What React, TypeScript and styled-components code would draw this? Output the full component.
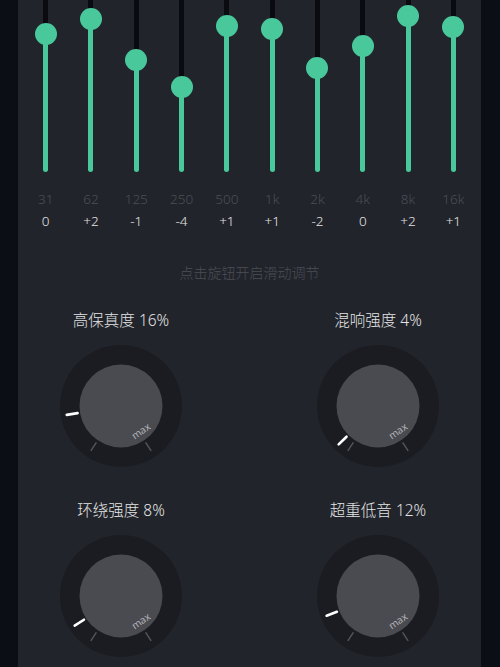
import styled, { createGlobalStyle } from 'styled-components'

const GlobalStyle = createGlobalStyle`
  html, body {
    margin: 0;
    padding: 0;
    background: #0b0e15;
    overflow: hidden;
  }
  body {
    font-family: "Noto Sans", "Noto Sans CJK SC", sans-serif;
  }
`

const color = {
    green: '#49c99b',
    track: '#0a0b10',
    panel: '#22242b',
    dim: '#4b4e56',
    text: '#e4e4e6',
    ring: '#1b1c22',
    face: '#4a4b51',
}

const Screen = styled.div`
  width: 500px;
  height: 667px;
  display: flex;
  background: #0b0e15;
`

const Panel = styled.div`
  margin-left: 18px;
  width: 463px;
  height: 667px;
  background: ${color.panel};
  display: flex;
  flex-direction: column;
  overflow: hidden;
`

const Equalizer = styled.div`
  display: grid;
  grid-template-columns: repeat(10, 1fr);
  padding: 0 5px;
`

const Band = styled.div`
  display: flex;
  flex-direction: column;
  align-items: center;
`

const Track = styled.div`
  position: relative;
  width: 5px;
  height: 172px;
  border-radius: 0 0 3px 3px;
  background: ${color.track};
`

const Fill = styled.div<{ top: number }>`
  position: absolute;
  left: 0;
  right: 0;
  bottom: 0;
  top: ${p => p.top}px;
  border-radius: 3px;
  background: ${color.green};
`

const Thumb = styled.div<{ top: number }>`
  position: absolute;
  left: 50%;
  top: ${p => p.top}px;
  width: 22px;
  height: 22px;
  margin: -11px 0 0 -11px;
  border-radius: 50%;
  background: ${color.green};
`

const Freq = styled.div`
  margin-top: 19px;
  font-size: 13.5px;
  font-weight: 300;
  line-height: 16px;
  color: ${color.dim};
`

const Gain = styled.div`
  margin-top: 6px;
  font-size: 13.5px;
  font-weight: 300;
  line-height: 16px;
  color: ${color.text};
`

const Hint = styled.div`
  margin-top: 35px;
  text-align: center;
  font-size: 14px;
  font-weight: 300;
  line-height: 18px;
  color: ${color.dim};
`

const KnobGrid = styled.div`
  margin-top: 28px;
  display: grid;
  grid-template-columns: 206px 206px;
  justify-content: space-between;
  row-gap: 32px;
`

const KnobCell = styled.div`
  display: flex;
  flex-direction: column;
  align-items: center;
`

const KnobLabel = styled.div`
  font-size: 15.5px;
  font-weight: 300;
  line-height: 20px;
  color: ${color.text};
`

const KnobFace = styled.svg`
  margin-top: 14px;
  display: block;
`

const bands = [
    { f: '31', g: '0', y: 34 },
    { f: '62', g: '+2', y: 19 },
    { f: '125', g: '-1', y: 60 },
    { f: '250', g: '-4', y: 87 },
    { f: '500', g: '+1', y: 26 },
    { f: '1k', g: '+1', y: 29 },
    { f: '2k', g: '-2', y: 68 },
    { f: '4k', g: '0', y: 46 },
    { f: '8k', g: '+2', y: 16 },
    { f: '16k', g: '+1', y: 27 },
]

const knobs = [
    { name: '高保真度', value: 16 },
    { name: '混响强度', value: 4 },
    { name: '环绕强度', value: 8 },
    { name: '超重低音', value: 12 },
]

const C = 62
const START = 214
const SWEEP = 292

const polar = (deg: number, r: number) => {
    const a = (deg * Math.PI) / 180
    return { x: C + r * Math.sin(a), y: C - r * Math.cos(a) }
}

const Knob = ({ value }: { value: number }) => {
    const ang = START + (SWEEP * value) / 100
    const p1 = polar(ang, 44)
    const p2 = polar(ang, 55)
    const ticks = [START, START + SWEEP].map(a => [polar(a, 44), polar(a, 54)])
    return (
        <KnobFace width={124} height={124} viewBox="0 0 124 124">
            <circle cx={C} cy={C} r={61} fill={color.ring} />
            <circle cx={C} cy={C} r={41.5} fill={color.face} />
            {ticks.map(([a, b], i) => (
                <line key={i} x1={a.x} y1={a.y} x2={b.x} y2={b.y} stroke="#55575d" strokeWidth={1.4} />
            ))}
            <text
                x={0}
                y={0}
                fontSize={10}
                fill="#b4b5b9"
                textAnchor="middle"
                fontFamily="Noto Sans, sans-serif"
                transform={`translate(${C + 22} ${C + 28}) rotate(-35)`}
            >
                max
            </text>
            <line x1={p1.x} y1={p1.y} x2={p2.x} y2={p2.y} stroke="#ffffff" strokeWidth={2.6} strokeLinecap="round" />
        </KnobFace>
    )
}

const App = () => (
    <Screen>
        <GlobalStyle />
        <Panel>
            <Equalizer>
                {bands.map(b => (
                    <Band key={b.f}>
                        <Track>
                            <Fill top={b.y} />
                            <Thumb top={b.y} />
                        </Track>
                        <Freq>{b.f}</Freq>
                        <Gain>{b.g}</Gain>
                    </Band>
                ))}
            </Equalizer>
            <Hint>点击旋钮开启滑动调节</Hint>
            <KnobGrid>
                {knobs.map(k => (
                    <KnobCell key={k.name}>
                        <KnobLabel>{k.name} {k.value}%</KnobLabel>
                        <Knob value={k.value} />
                    </KnobCell>
                ))}
            </KnobGrid>
        </Panel>
    </Screen>
)

export default App
